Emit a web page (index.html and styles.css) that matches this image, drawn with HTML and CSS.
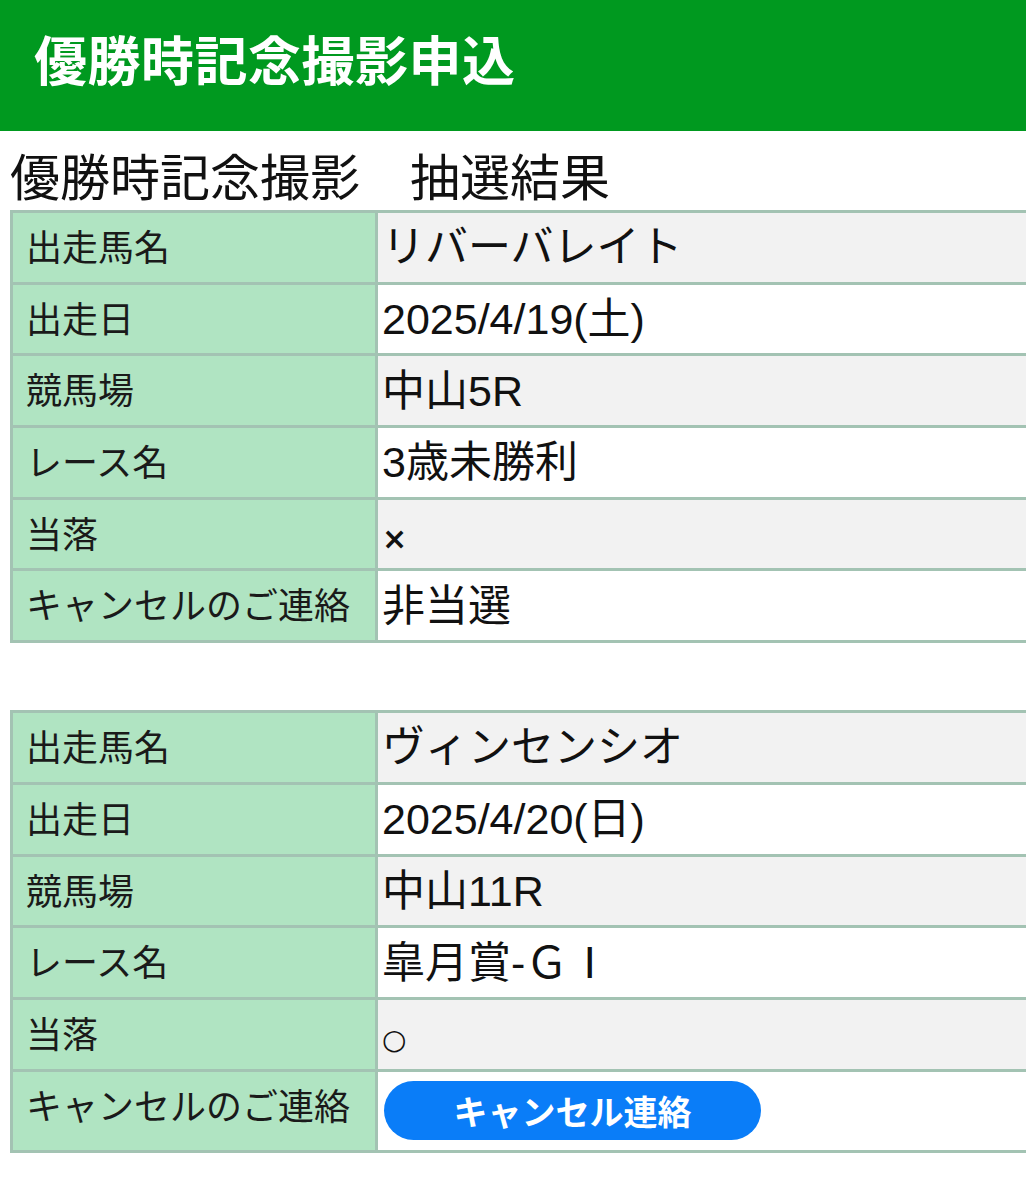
FILE: index.html
```html
<!DOCTYPE html>
<html lang="ja">
<head>
<meta charset="utf-8">
<title>優勝時記念撮影申込</title>
<link rel="stylesheet" href="styles.css">
</head>
<body>
<header class="topbar">
  <h1 class="topbar-title">優勝時記念撮影申込</h1>
</header>
<main class="content">
  <h2 class="page-title">優勝時記念撮影　抽選結果</h2>
  <table class="result">
    <tr class="odd"><th>出走馬名</th><td>リバーバレイト</td></tr>
    <tr><th>出走日</th><td>2025/4/19(土)</td></tr>
    <tr class="odd"><th>競馬場</th><td>中山5R</td></tr>
    <tr><th>レース名</th><td>3歳未勝利</td></tr>
    <tr class="odd"><th>当落</th><td><span class="mark-x">×</span></td></tr>
    <tr><th>キャンセルのご連絡</th><td>非当選</td></tr>
  </table>
  <table class="result second">
    <tr class="odd"><th>出走馬名</th><td>ヴィンセンシオ</td></tr>
    <tr><th>出走日</th><td>2025/4/20(日)</td></tr>
    <tr class="odd"><th>競馬場</th><td>中山11R</td></tr>
    <tr><th>レース名</th><td>皐月賞-ＧⅠ</td></tr>
    <tr class="odd"><th>当落</th><td><span class="mark-o">○</span></td></tr>
    <tr><th>キャンセルのご連絡</th><td><button class="cancel-btn" type="button">キャンセル連絡</button></td></tr>
  </table>
</main>
</body>
</html>
```

FILE: styles.css
```css
html, body {
  margin: 0;
  padding: 0;
  background: #ffffff;
  overflow-x: hidden;
}

body {
  font-family: "Liberation Sans", "Noto Sans CJK JP", sans-serif;
  color: #111111;
}

.topbar {
  background: #00991f;
  height: 131px;
  box-sizing: border-box;
  padding: 27px 0 0 34px;
}

.topbar-title {
  margin: 0;
  font-family: "Noto Sans CJK JP", sans-serif;
  font-weight: 700;
  font-size: 53px;
  line-height: 62px;
  color: #ffffff;
  letter-spacing: 0.5px;
}

.content {
  padding: 0 0 0 10px;
}

.page-title {
  margin: 13px 0 6px 0;
  font-family: "Noto Sans CJK JP", sans-serif;
  font-weight: 400;
  font-size: 50px;
  line-height: 60px;
  color: #111111;
}

.result {
  border-collapse: collapse;
  width: 1040px;
  table-layout: fixed;
}

.result.second {
  margin-top: 67px;
}

.result th,
.result td {
  border: 3px solid #a3c3b3;
  height: 50.7px;
  padding: 9px 4px 9px 4px;
  text-align: left;
  white-space: nowrap;
}

.result th {
  width: 345px;
  padding: 7px 4px 11px 13px;
  background: #b0e4c2;
  font-family: "Noto Sans CJK JP", sans-serif;
  font-weight: 400;
  font-size: 36px;
  line-height: 50px;
  vertical-align: top;
  color: #1a1a1a;
}

.result td {
  background: #ffffff;
  font-size: 43px;
  line-height: 50px;
  vertical-align: middle;
  color: #111111;
}

.result tr.odd td {
  background: #f2f2f2;
}

.mark-x {
  font-family: "DejaVu Sans", sans-serif;
  font-weight: 700;
  font-size: 30px;
  line-height: 1;
}

.mark-o {
  font-family: "DejaVu Sans", sans-serif;
  font-size: 28px;
  line-height: 1;
}

.cancel-btn {
  display: block;
  margin: 0 0 1px 2px;
  width: 377px;
  height: 59px;
  border: none;
  border-radius: 30px;
  background: #0a7df8;
  color: #ffffff;
  font-family: "Noto Sans CJK JP", sans-serif;
  font-weight: 700;
  font-size: 34px;
  line-height: 59px;
  padding: 0;
  text-align: center;
}
```
